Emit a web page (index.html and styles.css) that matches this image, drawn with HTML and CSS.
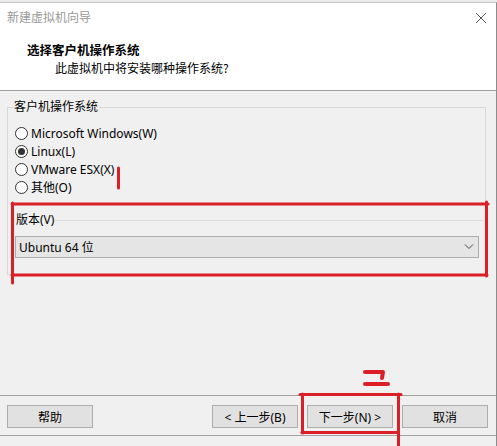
FILE: index.html
```html
<!DOCTYPE html>
<html lang="zh-CN">
<head>
<meta charset="utf-8">
<title>新建虚拟机向导</title>
<link rel="stylesheet" href="styles.css">
</head>
<body>
<div class="screen">
  <div class="window">
    <div class="titlebar">
      <span class="title-text">新建虚拟机向导</span>
      <svg class="close" width="12" height="12" viewBox="0 0 12 12"><path d="M1 1 L11 11 M11 1 L1 11" stroke="#555" stroke-width="1" fill="none"/></svg>
    </div>
    <div class="header">
      <div class="h-title">选择客户机操作系统</div>
      <div class="h-sub">此虚拟机中将安装哪种操作系统?</div>
    </div>
    <div class="main">
      <fieldset class="group">
        <legend class="legend">客户机操作系统</legend>
        <div class="radio-row"><span class="radio"></span><span>Microsoft Windows(W)</span></div>
        <div class="radio-row"><span class="radio checked"></span><span>Linux(L)</span></div>
        <div class="radio-row"><span class="radio"></span><span>VMware ESX(X)</span></div>
        <div class="radio-row"><span class="radio"></span><span>其他(O)</span></div>
        <fieldset class="subgroup">
          <legend class="legend">版本(V)</legend>
          <div class="combo">
            <span>Ubuntu 64 位</span>
            <svg class="chev" width="10" height="6" viewBox="0 0 10 6"><path d="M1 0.5 L5 4.5 L9 0.5" stroke="#444" stroke-width="1" fill="none"/></svg>
          </div>
        </fieldset>
      </fieldset>
    </div>
    <div class="footer">
      <button class="btn">帮助</button>
      <div class="nav">
        <button class="btn">&lt; 上一步(B)</button>
        <button class="btn">下一步(N) &gt;</button>
        <button class="btn">取消</button>
      </div>
    </div>
  </div>
  <svg class="marks" width="497" height="446" viewBox="0 0 497 446">
    <g stroke="#db1f26" stroke-width="3" fill="none" stroke-linecap="round" stroke-linejoin="round">
      <path d="M118.5 168 L118.5 188"/>
      <path d="M12 204 L488 204"/>
      <path d="M12.5 203 L12.5 283"/>
      <path d="M12 275 L487 275"/>
      <path d="M486.5 202 L486.5 276"/>
      <path d="M365 372 L383 372 L382 378" stroke-width="4"/>
      <path d="M365 384 L388 384" stroke-width="4"/>
      <path d="M300 394.5 L401 394.5"/>
      <path d="M302.5 394 L302.5 433"/>
      <path d="M302 432.5 L398 432.5"/>
      <path d="M398.5 394 L398.5 446"/>
    </g>
  </svg>
</div>
</body>
</html>
```

FILE: styles.css
```css
* { box-sizing: border-box; }
html, body { margin: 0; padding: 0; }
body {
  background: #ececec;
  font-family: "Noto Sans", "Noto Sans CJK SC", sans-serif;
  font-size: 12px;
  color: #000;
}
.screen {
  position: relative;
  width: 497px;
  height: 446px;
  overflow: hidden;
}
.window {
  margin-top: 2px;
  width: 497px;
  height: 444px;
  border-top: 1px solid #c4c4c4;
  border-right: 1px solid #8c8c8c;
  background: #f0f0f0;
  display: flex;
  flex-direction: column;
}
.titlebar {
  height: 29px;
  background: #fff;
  display: flex;
  align-items: center;
  justify-content: space-between;
  padding: 0 9px 0 7px;
}
.title-text {
  color: #9a9a9a;
  font-size: 12px;
  line-height: 16px;
}
.close { display: block; }
.header {
  height: 59px;
  background: #fff;
  border-bottom: 1px solid #a0a0a0;
  padding: 10px 0 0 27px;
}
.h-title {
  font-weight: bold;
  font-size: 12.5px;
  line-height: 16px;
  font-family: "Noto Sans CJK SC", sans-serif;
}
.h-sub {
  padding-left: 28px;
  line-height: 20px;
  font-family: "Noto Sans CJK SC", sans-serif;
}
.main {
  height: 305px;
  border-bottom: 1px solid #a0a0a0;
  padding: 8px 10px 0 7px;
}
.group {
  margin: 0;
  border: 1px solid #d8d8d8;
  padding: 9px 2px 16px 5px;
  min-width: 0;
}
.legend {
  padding: 0 1px;
  line-height: 16px;
  font-size: 12px;
}
.radio-row {
  height: 18px;
  display: flex;
  align-items: center;
  gap: 3px;
  padding-left: 2px;
  white-space: nowrap;
}
.radio {
  width: 13px;
  height: 13px;
  border: 1px solid #333;
  border-radius: 50%;
  background: #fff;
  display: flex;
  align-items: center;
  justify-content: center;
  flex: none;
}
.radio.checked::after {
  content: "";
  width: 7px;
  height: 7px;
  border-radius: 50%;
  background: #333;
}
.subgroup {
  margin: 16px 0 0 0;
  border: none;
  border-top: 1px solid #dcdcdc;
  padding: 8px 0 0 2px;
  min-width: 0;
}
.combo {
  height: 22px;
  margin-right: 4px;
  background: #e5e5e5;
  border: 1px solid #adadad;
  display: flex;
  align-items: center;
  justify-content: space-between;
  padding: 0 4px 0 3px;
}
.chev { display: block; }
.footer {
  height: 40px;
  border-bottom: 1px solid #a0a0a0;
  display: flex;
  align-items: flex-start;
  justify-content: space-between;
  padding: 9px 8px 0 7px;
}
.nav {
  display: flex;
  gap: 9px;
}
.btn {
  width: 86px;
  height: 23px;
  background: #e1e1e1;
  border: 1px solid #adadad;
  font-family: "Noto Sans", "Noto Sans CJK SC", sans-serif;
  font-size: 12px;
  color: #000;
  padding: 0;
  margin: 0;
}
.marks {
  position: absolute;
  top: 0;
  left: 0;
  pointer-events: none;
}
```
